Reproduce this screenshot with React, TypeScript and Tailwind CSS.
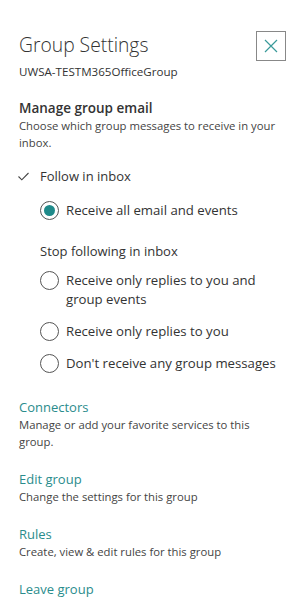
import React from 'react';

const font = { fontFamily: '"Open Sans", "Liberation Sans", sans-serif' };

const Radio = ({ checked }: { checked?: boolean }) => (
  <span className="flex h-[19px] w-[19px] shrink-0 items-center justify-center rounded-full border border-[#555]">
    {checked && <span className="h-[11px] w-[11px] rounded-full bg-[#1f8a8a]" />}
  </span>
);

const Option = ({ label, checked }: { label: React.ReactNode; checked?: boolean }) => (
  <div className="flex items-start gap-[7px]">
    <Radio checked={checked} />
    <span className="text-[13.2px] leading-[19px] text-[#333]">{label}</span>
  </div>
);

const LinkItem = ({ title, desc }: { title: string; desc?: React.ReactNode }) => (
  <div>
    <div className="text-[13px] leading-[18px] text-[#2a8c8c]">{title}</div>
    {desc && <div className="text-[11.3px] leading-[17px] text-[#444]">{desc}</div>}
  </div>
);

export default function App() {
  return (
    <div className="min-h-screen bg-white pl-[19px] pr-[10px] pt-[30px]" style={font}>
      <div className="flex items-start justify-between">
        <h1 className="text-[19.3px] font-light leading-[30px] text-[#333]">Group Settings</h1>
        <button className="mt-[1px] flex h-[30px] w-[30px] items-center justify-center border border-[#888]">
          <svg width="14" height="14" viewBox="0 0 14 14" fill="none" stroke="#3a9a9a" strokeWidth="1.2">
            <path d="M1 1 L13 13 M13 1 L1 13" />
          </svg>
        </button>
      </div>
      <div className="mt-[3px] text-[11.6px] leading-[16px] text-[#333]">UWSA-TESTM365OfficeGroup</div>

      <div className="mt-[19px] text-[13.5px] font-semibold leading-[18px] text-[#333]">Manage group email</div>
      <div className="text-[11.3px] leading-[17px] text-[#444]">
        Choose which group messages to receive in your inbox.
      </div>

      <div className="mt-[16px] flex items-center">
        <svg width="11" height="9" viewBox="0 0 11 9" fill="none" stroke="#444" strokeWidth="1.1" className="ml-[-1px]">
          <path d="M0.5 4.5 L3.8 7.8 L10.5 1" />
        </svg>
        <span className="ml-[11px] text-[13px] leading-[18px] text-[#333]">Follow in inbox</span>
      </div>

      <div className="ml-[21px]">
        <div className="mt-[16px]">
          <Option checked label="Receive all email and events" />
        </div>
        <div className="mt-[22px] text-[13px] leading-[18px] text-[#333]">Stop following in inbox</div>
        <div className="mt-[11px] flex flex-col gap-[13px]">
          <Option label={<>Receive only replies to you and<br />group events</>} />
          <Option label="Receive only replies to you" />
          <Option label="Don't receive any group messages" />
        </div>
      </div>

      <div className="mt-[25px] flex flex-col gap-[20px]">
        <LinkItem title="Connectors" desc="Manage or add your favorite services to this group." />
        <LinkItem title="Edit group" desc="Change the settings for this group" />
        <LinkItem title="Rules" desc="Create, view & edit rules for this group" />
        <LinkItem title="Leave group" />
      </div>
    </div>
  );
}
